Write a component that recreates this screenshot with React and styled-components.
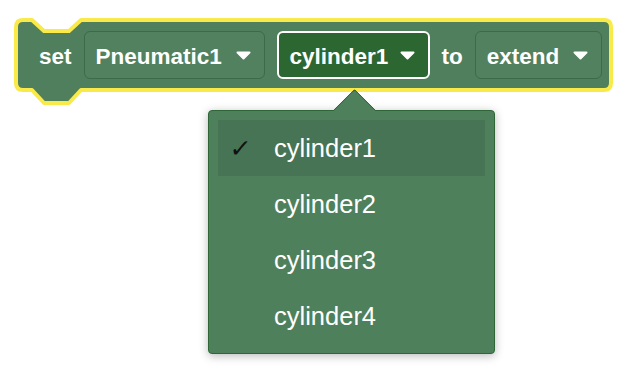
import styled, { createGlobalStyle } from 'styled-components';

const GlobalStyle = createGlobalStyle`
  html, body {
    margin: 0;
    padding: 0;
    background: #ffffff;
  }
  body {
    font-family: "Liberation Sans", Arial, Helvetica, sans-serif;
  }
`

const Page = styled.div`
  position: relative;
  width: 634px;
  height: 372px;
  padding: 18px 0 0 14px;
  box-sizing: border-box;
`

const Block = styled.div`
  position: relative;
  width: 599px;
  height: 74px;
  display: flex;
  align-items: center;
  gap: 12px;
  padding-left: 25px;
  box-sizing: border-box;
`

const BlockShape = styled.svg`
  position: absolute;
  left: 0;
  top: 0;
  overflow: visible;
  z-index: 0;
`

const Label = styled.span`
  position: relative;
  z-index: 1;
  color: #ffffff;
  font-weight: 700;
  font-size: 22.5px;
  padding-top: 3px;
`

const Dropdown = styled.div`
  position: relative;
  z-index: 1;
  width: ${p => p.$width}px;
  height: 48px;
  box-sizing: border-box;
  display: flex;
  align-items: center;
  justify-content: space-between;
  padding: 0 13px 0 11px;
  border-radius: 6px;
  background: ${p => (p.$active ? '#2c6631' : '#51815e')};
  border: ${p => (p.$active ? '2px solid #ffffff' : '1px solid #3d6b49')};
  color: #ffffff;
  font-weight: 700;
  font-size: 22.5px;
`

const FieldText = styled.span`
  padding-top: 3px;
`

const Arrow = styled.svg`
  flex: none;
  margin-top: 1px;
`

const Menu = styled.div`
  position: absolute;
  left: 208px;
  top: 110px;
  width: 287px;
  height: 244px;
  box-sizing: border-box;
  padding: 9px;
  background: #4f805c;
  border: 1px solid #2f6638;
  border-radius: 4px;
  box-shadow: 0 2px 10px rgba(0, 0, 0, 0.28);
  z-index: 5;
`

const MenuPointer = styled.div`
  position: absolute;
  left: 130px;
  top: -16px;
  width: 31px;
  height: 31px;
  background: #4f805c;
  border-top: 1px solid #2f6638;
  border-left: 1px solid #2f6638;
  border-top-left-radius: 3px;
  transform: rotate(45deg);
  box-sizing: border-box;
`

const MenuList = styled.div`
  position: relative;
  z-index: 1;
  display: flex;
  flex-direction: column;
`

const MenuItem = styled.div`
  height: 56px;
  display: flex;
  align-items: center;
  padding-left: 56px;
  position: relative;
  background: ${p => (p.$selected ? '#477454' : 'transparent')};
  color: #ffffff;
  font-size: 25.5px;
`

const Check = styled.span`
  position: absolute;
  left: 12px;
  top: 50%;
  transform: translateY(-50%) skewX(-6deg);
  font-family: "DejaVu Sans", sans-serif;
  font-size: 25px;
  color: #111111;
`

function DownArrow() {
  return (
    <Arrow width="15" height="9" viewBox="0 0 15 9">
      <polygon points="1.5,1.5 13.5,1.5 7.5,7.5" fill="#ffffff" stroke="#ffffff" strokeWidth="2" strokeLinejoin="round" />
    </Arrow>
  );
}

const shapePath =
  'M 9 2 L 18 2 L 30 13 L 55 13 L 67 2 L 590 2 Q 597 2 597 9 L 597 65 Q 597 72 590 72 ' +
  'L 67 72 L 55 85 L 30 85 L 18 72 L 9 72 Q 2 72 2 65 L 2 9 Q 2 2 9 2 Z';

const options = ['cylinder1', 'cylinder2', 'cylinder3', 'cylinder4'];

function App() {
  return (
    <Page>
      <GlobalStyle />
      <Block>
        <BlockShape width="599" height="74">
          <path d={shapePath} fill="#4f7f5c" stroke="#f9ea4a" strokeWidth="4" strokeLinejoin="round" />
        </BlockShape>
        <Label>set</Label>
        <Dropdown $width={181}>
          <FieldText>Pneumatic1</FieldText>
          <DownArrow />
        </Dropdown>
        <Dropdown $width={153} $active>
          <FieldText>cylinder1</FieldText>
          <DownArrow />
        </Dropdown>
        <Label>to</Label>
        <Dropdown $width={127}>
          <FieldText>extend</FieldText>
          <DownArrow />
        </Dropdown>
      </Block>
      <Menu>
        <MenuPointer />
        <MenuList>
          {options.map((opt, i) => (
            <MenuItem key={opt} $selected={i === 0}>
              {i === 0 && <Check>✓</Check>}
              {opt}
            </MenuItem>
          ))}
        </MenuList>
      </Menu>
    </Page>
  );
}

export default App;
